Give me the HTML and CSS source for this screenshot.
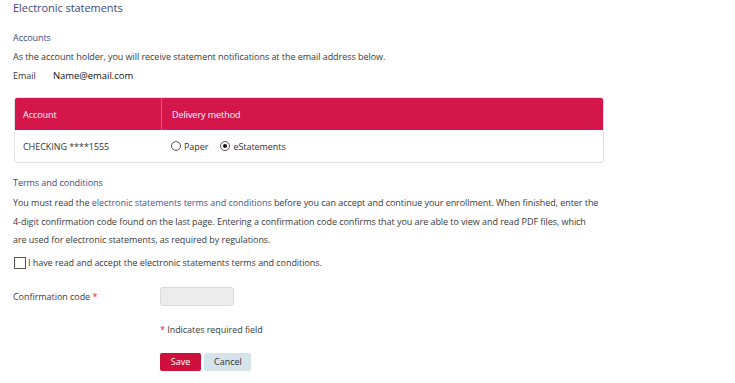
FILE: index.html
```html
<!DOCTYPE html>
<html lang="en">
<head>
    <meta charset="UTF-8">
    <title>Electronic statements</title>
    <link rel="stylesheet" href="styles.css">
</head>
<body>
    <div class="page">
        <h1 class="page-title">Electronic statements</h1>

        <h2 class="section-title">Accounts</h2>
        <p class="intro">As the account holder, you will receive statement notifications at the email address below.</p>
        <div class="email-row">
            <span class="email-label">Email</span>
            <span class="email-value">Name@email.com</span>
        </div>

        <div class="accounts-table">
            <div class="table-head">
                <div class="col-account">Account</div>
                <div class="col-delivery">Delivery method</div>
            </div>
            <div class="table-row">
                <div class="col-account">CHECKING ****1555</div>
                <div class="col-delivery">
                    <label class="radio"><span class="radio-dot"></span>Paper</label>
                    <label class="radio"><span class="radio-dot checked"></span>eStatements</label>
                </div>
            </div>
        </div>

        <h2 class="section-title terms-title">Terms and conditions</h2>
        <p class="terms-text">You must read the <a href="#">electronic statements terms and conditions</a> before you can accept and continue your enrollment. When finished, enter the 4-digit confirmation code found on the last page. Entering a confirmation code confirms that you are able to view and read PDF files, which<br>are used for electronic statements, as required by regulations.</p>

        <label class="accept"><span class="checkbox"></span>I have read and accept the electronic statements terms and conditions.</label>

        <div class="form-row">
            <span class="form-label">Confirmation code <span class="req">*</span></span>
            <span class="code-input"></span>
        </div>

        <div class="form-side">
            <p class="required-note"><span class="req">*</span> Indicates required field</p>
            <div class="buttons">
                <button class="btn-save">Save</button>
                <button class="btn-cancel">Cancel</button>
            </div>
        </div>
    </div>
</body>
</html>
```

FILE: styles.css
```css
body {
    margin: 0;
    padding: 0;
    background: #ffffff;
    font-family: "Open Sans", "Liberation Sans", sans-serif;
    color: #3a3a3a;
    font-size: 9px;
    letter-spacing: -0.05px;
}

.page {
    padding: 0 13px;
    width: 590px;
}

.page-title {
    margin: 0;
    padding-top: 1px;
    font-size: 11px;
    font-weight: normal;
    color: #3c4a82;
    line-height: 14px;
}

.section-title {
    margin: 17px 0 0;
    font-size: 9px;
    font-weight: normal;
    color: #3c4a82;
    line-height: 12px;
}

.intro {
    margin: 7px 0 0;
    line-height: 12px;
}

.email-row {
    margin-top: 7px;
    line-height: 12px;
    display: flex;
}

.email-label {
    width: 40px;
}

.email-value {
    color: #111;
    font-size: 9.5px;
}

.accounts-table {
    margin: 15px 0 0 1px;
    width: 588px;
    border: 1px solid #e2e2e2;
    border-radius: 3px;
    overflow: hidden;
}

.table-head {
    display: flex;
    height: 32px;
    align-items: stretch;
    background: #d4164a;
    color: #fff;
}

.table-head .col-account {
    border-right: 1px solid #e0577b;
}

.col-account {
    width: 138px;
    padding-left: 8px;
    display: flex;
    align-items: center;
}

.col-delivery {
    padding-left: 10px;
    display: flex;
    align-items: center;
}

.table-row {
    display: flex;
    height: 32px;
    color: #333;
}

.radio {
    display: flex;
    align-items: center;
    margin-right: 12px;
}

.radio-dot {
    width: 8px;
    height: 8px;
    border: 1px solid #555;
    border-radius: 50%;
    margin-right: 3px;
    position: relative;
}

.radio-dot.checked::after {
    content: '';
    position: absolute;
    left: 2px;
    top: 2px;
    width: 4px;
    height: 4px;
    border-radius: 50%;
    background: #111;
}

.terms-title {
    margin-top: 14px;
}

.terms-text {
    margin: 5px 0 0;
    line-height: 18.5px;
}

.terms-text a {
    color: #3f5a96;
    text-decoration: none;
}

.accept {
    display: flex;
    align-items: center;
    margin-top: 7px;
    line-height: 12px;
}

.checkbox {
    width: 10px;
    height: 10px;
    border: 1px solid #555;
    margin: 0 2px 0 1px;
}

.form-row {
    display: flex;
    align-items: center;
    margin-top: 18px;
}

.form-label {
    width: 147px;
}

.req {
    color: #d4164a;
}

.code-input {
    width: 72px;
    height: 17px;
    background: #ececec;
    border: 1px solid #dadada;
    border-radius: 3px;
}

.form-side {
    margin-left: 147px;
}

.required-note {
    margin: 18px 0 0;
    line-height: 12px;
}

.buttons {
    display: flex;
    gap: 3px;
    margin-top: 17px;
}

.buttons button {
    font-family: inherit;
    font-size: 9px;
    height: 18px;
    border: none;
    border-radius: 2px;
    padding: 0 10px;
    cursor: pointer;
}

.btn-save {
    background: #d0103c;
    color: #fff;
    width: 41px;
}

.btn-cancel {
    background: #d5e4eb;
    color: #333;
    width: 47px;
}
```
